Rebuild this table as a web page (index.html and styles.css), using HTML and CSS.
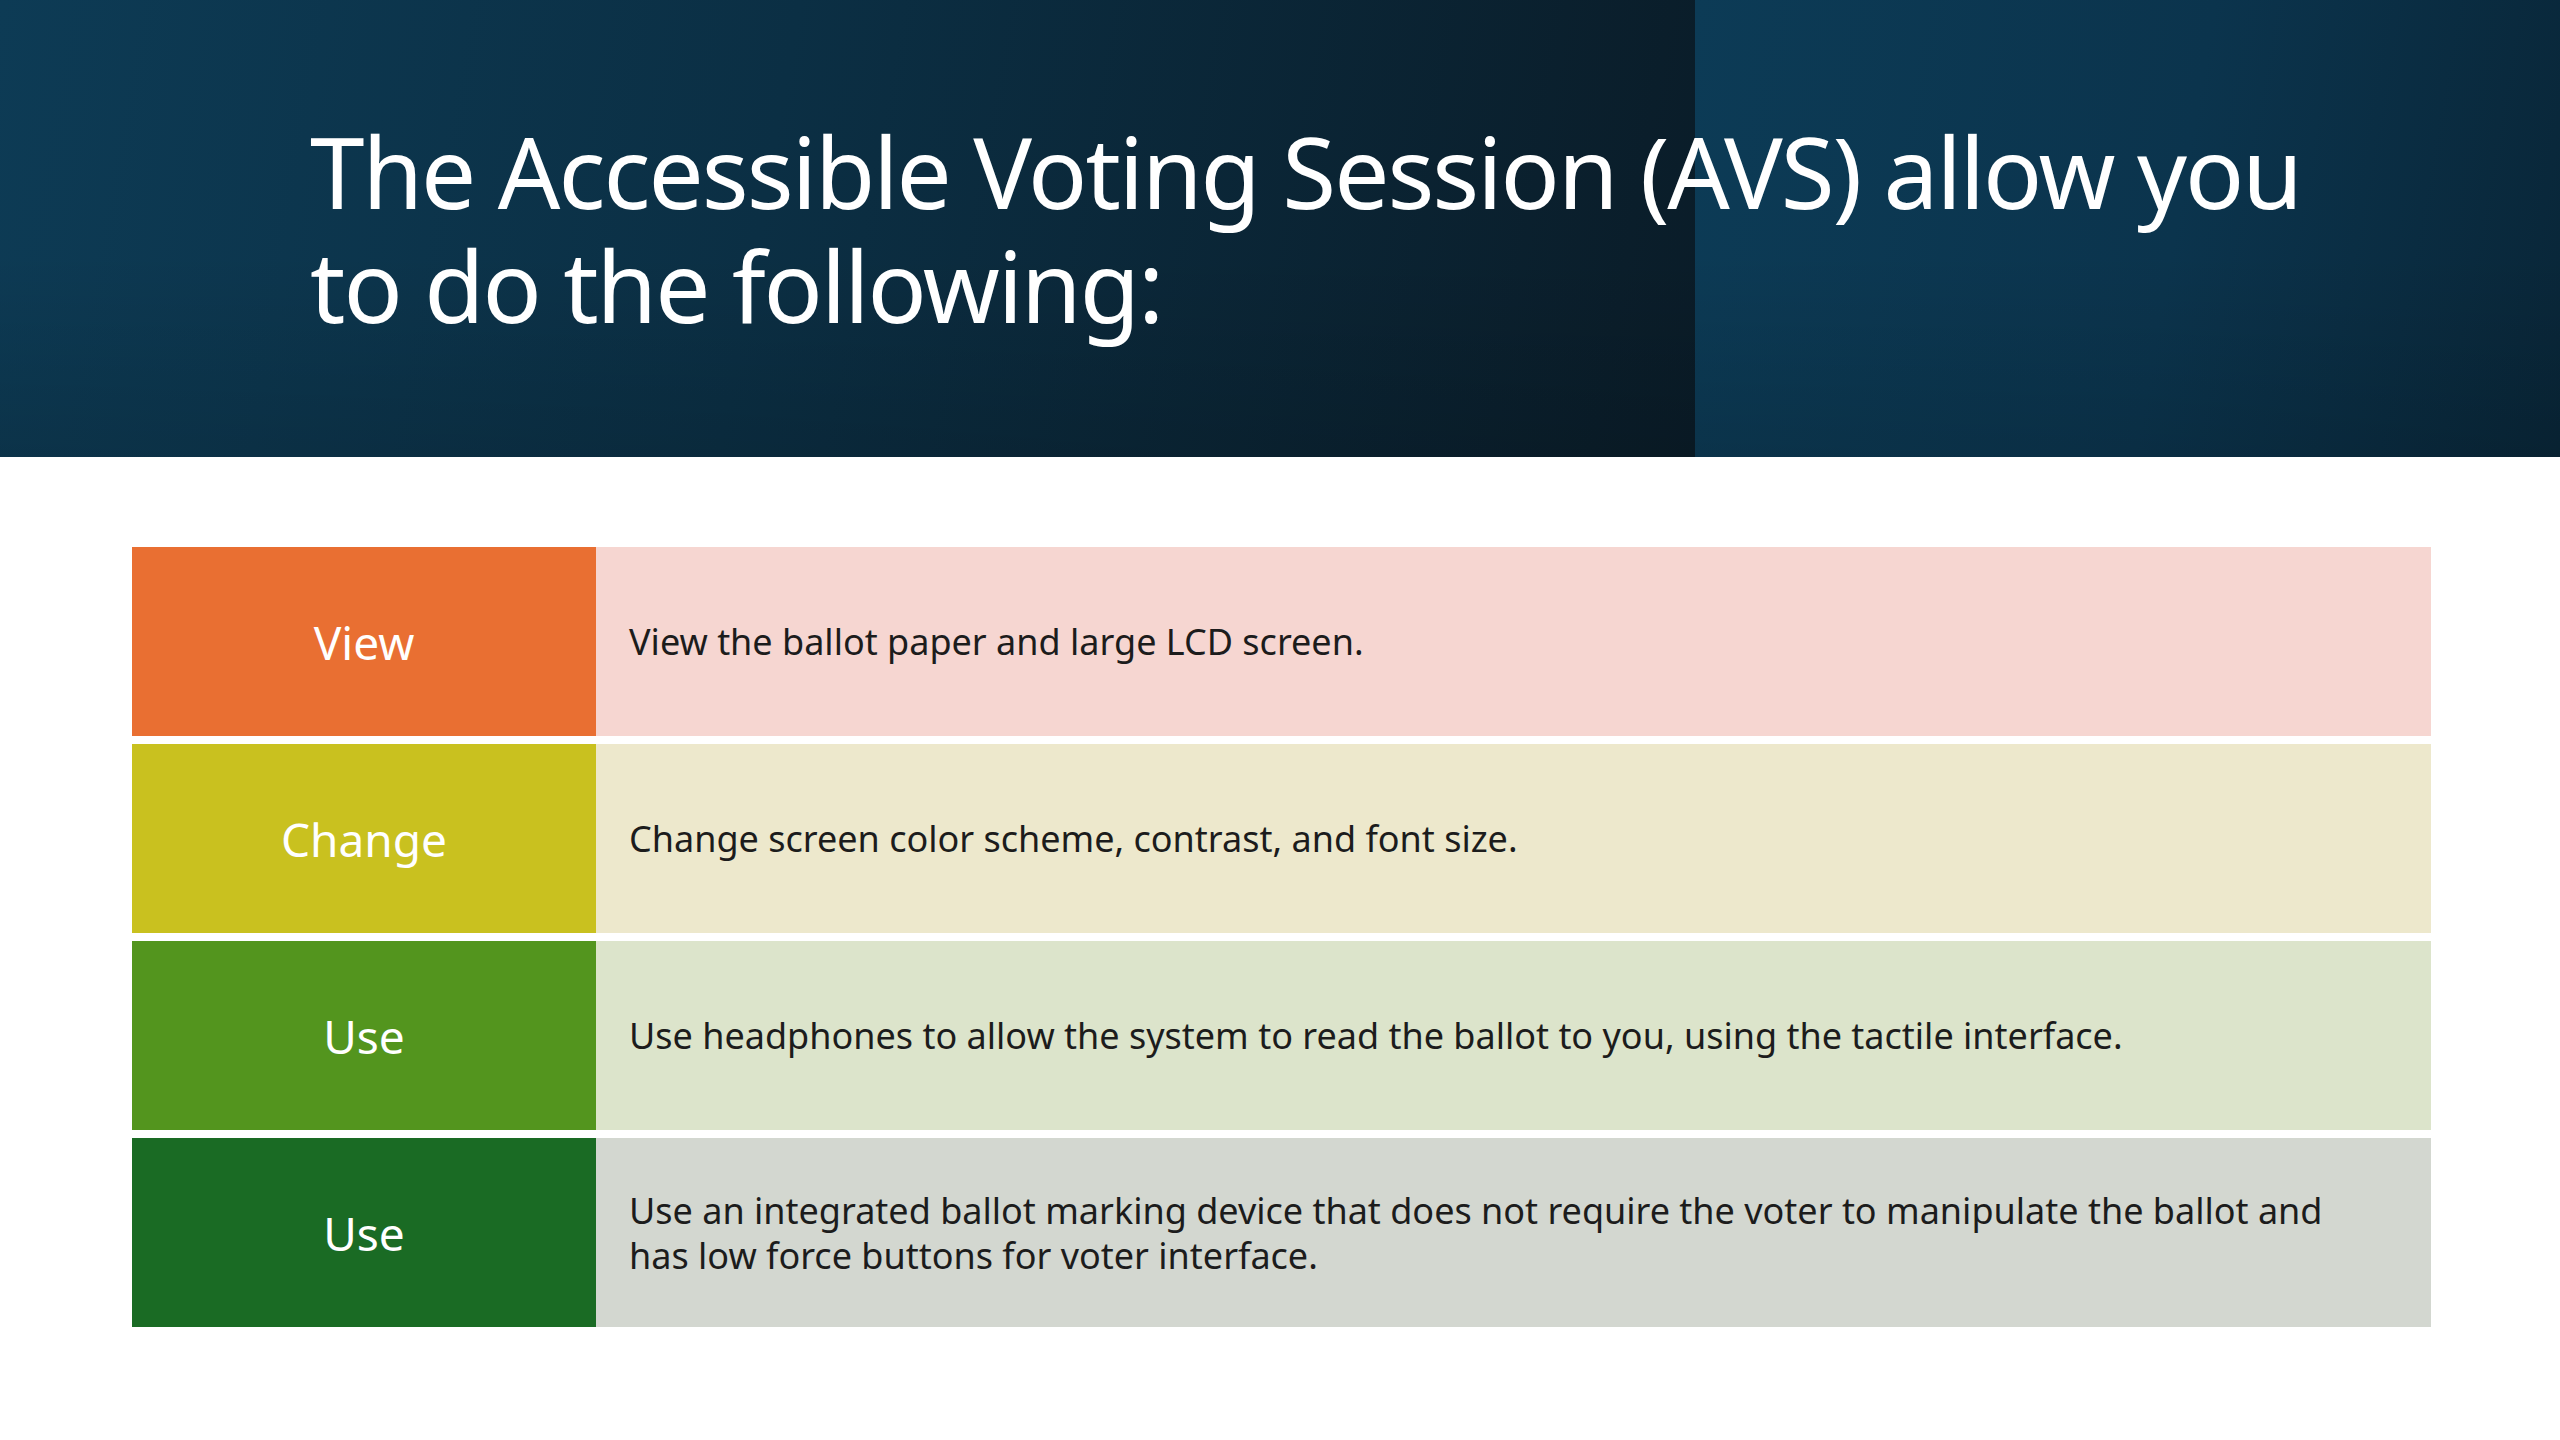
FILE: index.html
```html
<!DOCTYPE html>
<html lang="en">
<head>
<meta charset="utf-8">
<title>Accessible Voting Session</title>
<link rel="stylesheet" href="styles.css">
</head>
<body>
<header class="hero">
  <h1 class="hero-title">The Accessible Voting Session (AVS) allow you<br>to do the following:</h1>
</header>
<main class="content">
  <div class="table">
    <div class="row row-view">
      <div class="label">View</div>
      <div class="desc">View the ballot paper and large LCD screen.</div>
    </div>
    <div class="row row-change">
      <div class="label">Change</div>
      <div class="desc">Change screen color scheme, contrast, and font size.</div>
    </div>
    <div class="row row-use1">
      <div class="label">Use</div>
      <div class="desc">Use headphones to allow the system to read the ballot to you, using the tactile interface.</div>
    </div>
    <div class="row row-use2">
      <div class="label">Use</div>
      <div class="desc">Use an integrated ballot marking device that does not require the voter to manipulate the ballot and<br>has low force buttons for voter interface.</div>
    </div>
  </div>
</main>
</body>
</html>
```
FILE: styles.css
```css
html, body {
  margin: 0;
  padding: 0;
  background: #ffffff;
}
body {
  width: 2560px;
  height: 1440px;
  overflow: hidden;
  font-family: "Noto Sans", "Liberation Sans", sans-serif;
}
.hero {
  height: 457px;
  box-sizing: border-box;
  padding: 114px 0 0 310px;
  background:
    linear-gradient(to bottom, rgba(0,0,0,0) 55%, rgba(0,0,0,0.12) 100%) 0 0 / 100% 100% no-repeat,
    linear-gradient(100deg, #0c3b56 0%, #0b344d 55%, #092638 100%) right top / 865px 100% no-repeat,
    linear-gradient(100deg, #0d3b55 0%, #0b2f44 45%, #0a1c28 100%) left top / 1695px 100% no-repeat;
}
.hero-title {
  margin: 0;
  color: #ffffff;
  font-weight: 400;
  font-size: 98px;
  line-height: 114px;
  letter-spacing: -2px;
}
.content {
  padding: 90px 129px 0 132px;
}
.table {
  display: flex;
  flex-direction: column;
  gap: 8px;
}
.row {
  display: flex;
  height: 189px;
}
.label {
  width: 464px;
  flex: none;
  display: flex;
  align-items: center;
  justify-content: center;
  color: #ffffff;
  font-size: 46px;
}
.desc {
  flex: 1;
  display: flex;
  align-items: center;
  padding-left: 33px;
  color: #1c1c1c;
  font-size: 36px;
  line-height: 45px;
}
.row-view .label { background: #e96f32; }
.row-view .desc { background: #f6d6d1; }
.row-change .label { background: #c9c11f; }
.row-change .desc { background: #ede8cc; }
.row-use1 .label { background: #53951e; }
.row-use1 .desc { background: #dce4cb; }
.row-use2 .label { background: #1a6b24; }
.row-use2 .desc { background: #d3d7d0; }
```
